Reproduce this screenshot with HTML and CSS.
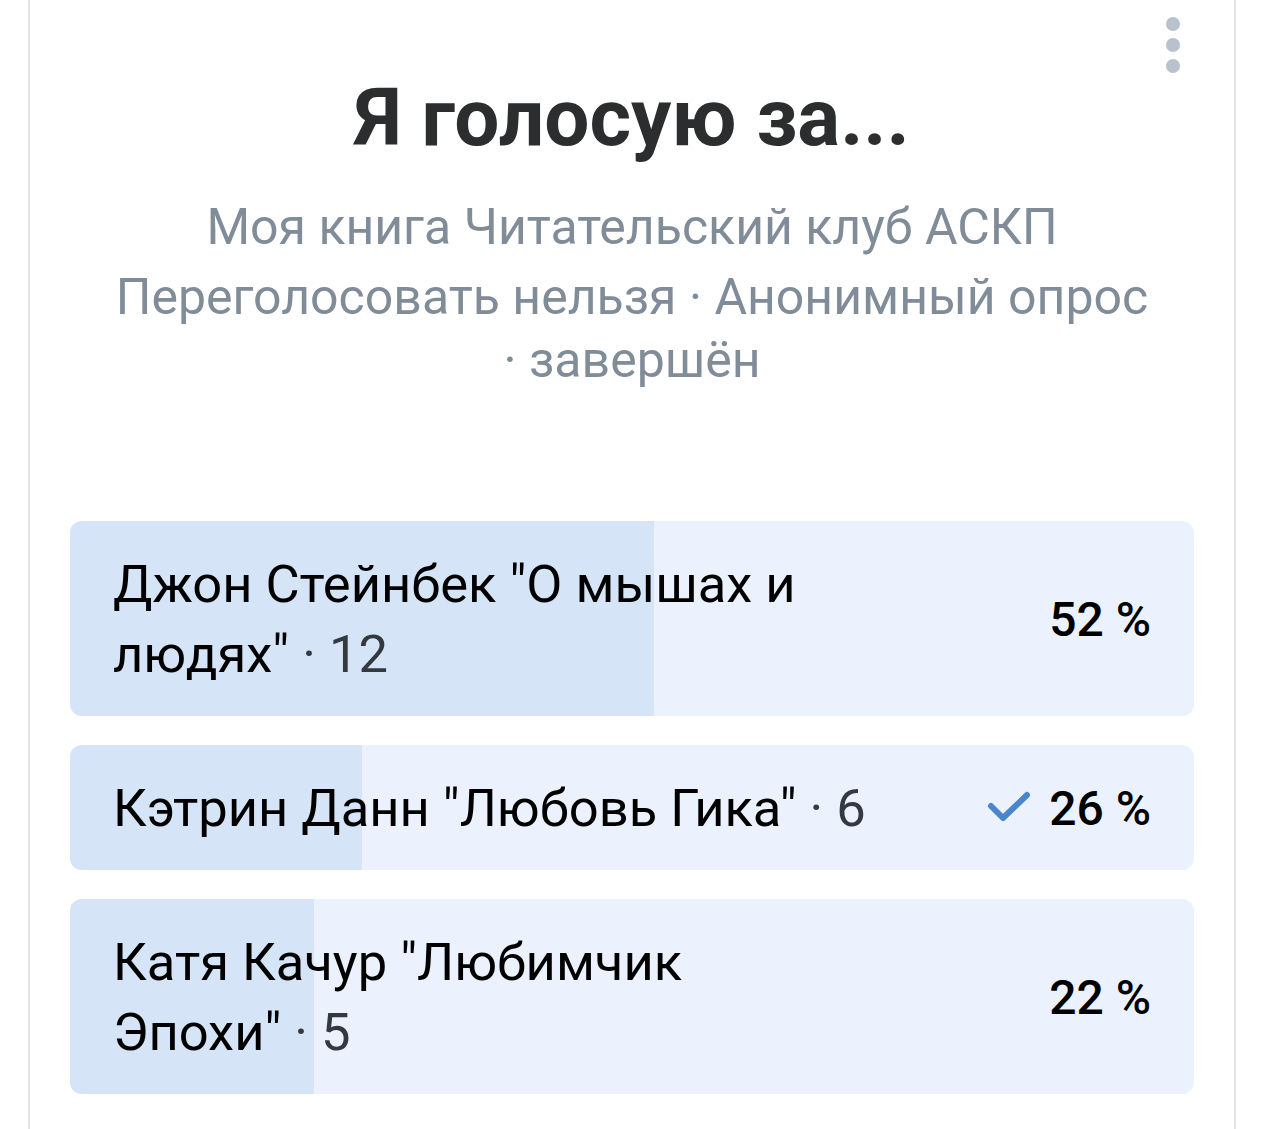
FILE: index.html
```html
<!DOCTYPE html>
<html lang="ru">
<head>
    <meta charset="UTF-8">
    <meta name="viewport" content="width=device-width, initial-scale=1.0">
    <title>Опрос</title>
    <link rel="stylesheet" href="styles.css">
</head>
<body>

    <div class="poll">
        <button class="poll-menu" aria-label="Ещё">
            <span></span><span></span><span></span>
        </button>

        <h1 class="poll-title">Я голосую за...</h1>
        <p class="poll-owner">Моя книга Читательский клуб АСКП</p>
        <p class="poll-meta">Переголосовать нельзя ·&nbsp;Анонимный опрос ·&nbsp;завершён</p>

        <div class="answers">
            <div class="answer">
                <div class="answer-fill" style="width: 52%"></div>
                <div class="answer-text">Джон Стейнбек "О мышах и людях"&nbsp;<span class="answer-count">·&nbsp;12</span></div>
                <div class="answer-percent">52 %</div>
            </div>
            <div class="answer">
                <div class="answer-fill" style="width: 26%"></div>
                <div class="answer-text">Кэтрин Данн "Любовь Гика"&nbsp;<span class="answer-count">·&nbsp;6</span></div>
                <div class="answer-percent">
                    <svg class="check" width="44" height="34" viewBox="0 0 44 34">
                        <polyline points="4,15 16,27 40,4" fill="none" stroke="#4986cc" stroke-width="6" stroke-linecap="round" stroke-linejoin="round"/>
                    </svg>
                    26 %
                </div>
            </div>
            <div class="answer">
                <div class="answer-fill" style="width: 21.7%"></div>
                <div class="answer-text">Катя Качур "Любимчик Эпохи"&nbsp;<span class="answer-count">·&nbsp;5</span></div>
                <div class="answer-percent">22 %</div>
            </div>
        </div>
    </div>

</body>
</html>
```

FILE: styles.css
```css
body {
    margin: 0;
    background: #fff;
    font-family: Roboto, "Noto Sans", sans-serif;
    overflow: hidden;
}
.poll {
    position: relative;
    margin-left: 28px;
    width: 1208px;
    min-height: 1200px;
    box-sizing: border-box;
    border-left: 2px solid #e1e3e6;
    border-right: 2px solid #e1e3e6;
    padding: 71px 40px 0;
    text-align: center;
}
.poll-menu {
    position: absolute;
    top: 17px;
    right: 54px;
    display: flex;
    flex-direction: column;
    gap: 7px;
    padding: 0;
    border: none;
    background: none;
}
.poll-menu span {
    width: 14px;
    height: 14px;
    border-radius: 50%;
    background: #b8c1cc;
}
.poll-title {
    margin: 0;
    font-size: 80px;
    line-height: 94px;
    font-weight: 700;
    color: #2c2d2e;
}
.poll-owner,
.poll-meta {
    margin: 31px 0 0;
    font-size: 50px;
    line-height: 63px;
    color: #818c99;
}
.poll-meta {
    margin-top: 7px;
}

.answers {
    margin-top: 129px;
    display: flex;
    flex-direction: column;
    gap: 29px;
    text-align: left;
}
.answer {
    position: relative;
    display: flex;
    align-items: center;
    justify-content: space-between;
    gap: 40px;
    padding: 28px 43px 27px;
    border-radius: 12px;
    background: #ebf2fd;
    overflow: hidden;
}
.answer-fill {
    position: absolute;
    top: 0;
    bottom: 0;
    left: 0;
    background: #d5e4f6;
}
.answer-text {
    position: relative;
    max-width: 790px;
    font-size: 52.5px;
    line-height: 70px;
    color: #000;
}
.answer-count {
    color: #33393f;
}
.answer-percent {
    position: relative;
    display: flex;
    align-items: center;
    gap: 18px;
    font-size: 48px;
    font-weight: 500;
    color: #000;
    white-space: nowrap;
}
.check {
    display: block;
}
```
